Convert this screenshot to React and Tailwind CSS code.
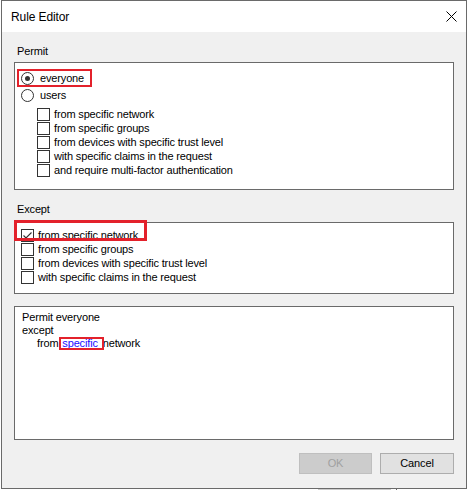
import React from "react";

const font = { fontFamily: '"Liberation Sans", Arial, sans-serif' };

const Radio = ({ checked }) => (
  <span className="w-[13px] h-[13px] rounded-full border border-[#333333] bg-white flex items-center justify-center shrink-0">
    {checked && <span className="w-[5px] h-[5px] rounded-full bg-[#333333]" />}
  </span>
);

const Checkbox = ({ checked }) => (
  <span className="w-[13px] h-[13px] border border-[#333333] bg-white flex items-center justify-center shrink-0">
    {checked && (
      <svg width="11" height="11" viewBox="0 0 11 11">
        <path d="M1.5 5.5 L4 8 L9.5 2.5" fill="none" stroke="#333333" strokeWidth="1.1" />
      </svg>
    )}
  </span>
);

const CheckRow = ({ label, checked, indent }) => (
  <div className={`h-[14px] flex items-center ${indent}`}>
    <Checkbox checked={checked} />
    <span className="ml-[4px] leading-none">{label}</span>
  </div>
);

const permitChecks = [
  "from specific network",
  "from specific groups",
  "from devices with specific trust level",
  "with specific claims in the request",
  "and require multi-factor authentication",
];

const exceptChecks = [
  "from specific network",
  "from specific groups",
  "from devices with specific trust level",
  "with specific claims in the request",
];

export default function App() {
  return (
    <div
      className="w-[468px] h-[490px] bg-white pl-[1px] text-[11px] tracking-[-0.15px] text-black"
      style={font}
    >
      <div className="w-[466px] h-[489px] border border-[#6a6a6a] flex flex-col">
        {/* Title bar */}
        <div className="h-[31px] bg-white flex items-center justify-between pl-[9px] pr-[9px]">
          <span className="text-[12px] tracking-[-0.1px]">Rule Editor</span>
          <svg width="11" height="11" viewBox="0 0 11 11">
            <path d="M0.5 0.5 L10.5 10.5 M10.5 0.5 L0.5 10.5" stroke="#000" strokeWidth="1" />
          </svg>
        </div>

        {/* Body */}
        <div className="flex-1 bg-[#f0f0f0] px-3 flex flex-col">
          <div className="mt-[12px] h-[14px] leading-[14px] pl-[3px]">Permit</div>
          <div className="mt-[4px] h-[128px] border border-[#6a6a6a] bg-white pt-[6px]">
            <div className="ml-[2px] w-[75px] h-[18px] border-2 border-[#e3212b] flex items-center pl-[2px]">
              <Radio checked />
              <span className="ml-[6px] leading-none">everyone</span>
            </div>
            <div className="h-[16px] flex items-center pl-[6px]">
              <Radio />
              <span className="ml-[6px] leading-none">users</span>
            </div>
            <div className="mt-[4px]">
              {permitChecks.map((c) => (
                <CheckRow key={c} label={c} indent="pl-[22px]" />
              ))}
            </div>
          </div>

          <div className="mt-[12px] h-[14px] leading-[14px] pl-[3px]">Except</div>
          <div className="mt-[6px] h-[72px] border border-[#6a6a6a] bg-white pt-[5px] relative">
            {exceptChecks.map((c, i) => (
              <CheckRow key={c} label={c} checked={i === 0} indent="pl-[6px]" />
            ))}
            <div className="absolute left-[-1px] top-[-3px] w-[133px] h-[21px] border-[3px] border-[#e3212b]" />
          </div>

          <div className="mt-[12px] h-[134px] border border-[#6a6a6a] bg-white pt-[4px] pl-[7px] relative">
            <div className="h-[13px] leading-[13px]">Permit everyone</div>
            <div className="h-[13px] leading-[13px]">except</div>
            <div className="h-[13px] leading-[13px] pl-[15px]">
              from <span className="text-[#1a0dff] ml-[1px] mr-[2px]">specific</span> network
            </div>
            <div className="absolute left-[44px] top-[30px] w-[45px] h-[13px] border-2 border-[#e3212b]" />
          </div>

          <div className="mt-[13px] flex justify-end gap-[8px]">
            <div className="w-[73px] h-[21px] bg-[#cccccc] border border-[#bfbfbf] text-[#a0a0a0] flex items-center justify-center">
              OK
            </div>
            <div className="w-[74px] h-[21px] bg-[#e1e1e1] border border-[#adadad] flex items-center justify-center">
              Cancel
            </div>
          </div>
        </div>
      </div>
      <div className="h-[1px] flex">
        <div className="ml-[317px] w-[73px] bg-[#cccccc]" />
        <div className="ml-[5px] w-[1px] bg-[#6a6a6a]" />
      </div>
    </div>
  );
}
